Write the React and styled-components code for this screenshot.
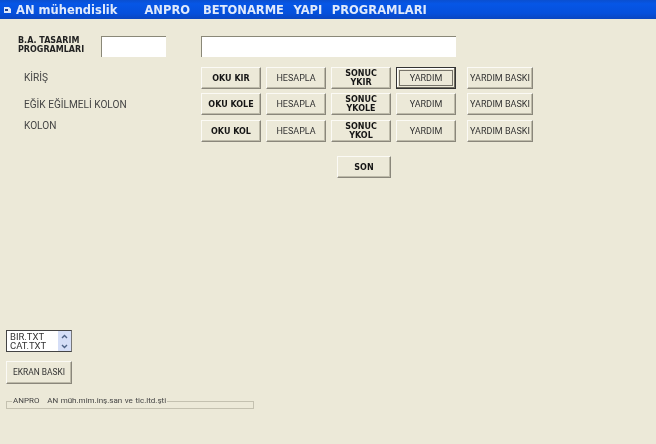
import React from 'react';
import styled, { createGlobalStyle } from 'styled-components';

const Global = createGlobalStyle`
  html, body { margin: 0; padding: 0; background: #ece9d8; }
  #root { width: 656px; height: 444px; overflow: hidden; }
`;

const Win = styled.div`
  width: 656px;
  height: 444px;
  background: #ece9d8;
  display: flex;
  flex-direction: column;
  font-family: Roboto, "Liberation Sans", sans-serif;
  color: #333;
  filter: blur(0.35px);
`;

const TitleBar = styled.div`
  height: 19px;
  flex: none;
  display: flex;
  align-items: center;
  padding-left: 4px;
  background: linear-gradient(180deg, #0a4fd0 0%, #0656e6 20%, #0550dc 70%, #0a46c0 100%);
  color: #dfe9fb;
  font-family: "DejaVu Sans", Verdana, sans-serif;
  font-weight: bold;
  font-size: 11.5px;
  white-space: pre;
`;

const TitleIcon = styled.svg`
  width: 7px;
  height: 6px;
  margin-right: 5px;
  flex: none;
`;

const TitleText = styled.span`
  margin-left: ${p => p.$gap || 0}px;
  word-spacing: ${p => p.$spread || 0}px;
`;

const Body = styled.div`
  flex: 1;
  display: flex;
  flex-direction: column;
  padding: 17px 0 0 6px;
`;

const TopRow = styled.div`
  display: flex;
  align-items: flex-start;
  height: 21px;
`;

const CaptionLabel = styled.div`
  width: 95px;
  padding: 0 0 0 12px;
  box-sizing: border-box;
  font-family: "DejaVu Sans", Verdana, sans-serif;
  font-weight: bold;
  font-size: 8px;
  line-height: 9px;
  color: #222;
`;

const Field = styled.div`
  width: ${p => p.$w}px;
  height: 21px;
  margin-right: ${p => p.$mr || 0}px;
  background: #fff;
  border-top: 1px solid #8a8878;
  border-left: 1px solid #8a8878;
  box-sizing: border-box;
`;

const Rows = styled.div`
  display: flex;
  flex-direction: column;
  margin-top: 10px;
`;

const Row = styled.div`
  display: flex;
  height: 21px;
  margin-bottom: ${p => p.$mb}px;
`;

const RowLabel = styled.div`
  width: 195px;
  margin-top: ${p => p.$top}px;
  padding-left: 18px;
  box-sizing: border-box;
  font-size: 10.1px;
  line-height: 11px;
  color: #444;
`;

const Btn = styled.div`
  width: ${p => p.$w || 60}px;
  height: ${p => p.$h || 22}px;
  margin-right: ${p => p.$mr ?? 5}px;
  flex: none;
  box-sizing: border-box;
  display: flex;
  align-items: center;
  justify-content: center;
  text-align: center;
  background: #ece9d8;
  border-style: solid;
  border-width: 1px;
  border-color: #fbfaf5 #8a877b #8a877b #fbfaf5;
  box-shadow: inset -1px -1px 0 #bdbaa9;
  font-size: 9px;
  line-height: 9px;
  color: #333;
  white-space: pre;

  ${p => p.$bold && `
    font-family: "DejaVu Sans", Verdana, sans-serif;
    font-weight: bold;
    font-size: 8px;
    color: #151515;
  `}

  ${p => p.$focus && `
    border: 1px solid #333;
    box-shadow: inset -1px -1px 0 #6e6c60, inset 1px 1px 0 #fff;
    position: relative;
    &::after {
      content: "";
      position: absolute;
      inset: 2px;
      border: 1px solid #77746a;
    }
  `}
`;

const SonRow = styled.div`
  display: flex;
  margin: 15px 0 0 331px;
`;

const Bottom = styled.div`
  margin-top: 152px;
  display: flex;
  flex-direction: column;
  align-items: flex-start;
`;

const ListBox = styled.div`
  width: 66px;
  height: 22px;
  box-sizing: border-box;
  display: flex;
  background: #fff;
  border: 1px solid #444;
  border-right-color: #777;
  font-size: 9.5px;
  line-height: 9px;
  color: #333;
`;

const ListItems = styled.div`
  flex: 1;
  padding: 1px 0 0 3px;
`;

const ScrollCol = styled.div`
  width: 13px;
  display: flex;
  flex-direction: column;
`;

const ScrollBtn = styled.div`
  flex: 1;
  background: #d5def7;
  display: flex;
  align-items: center;
  justify-content: center;
`;

const PrintBtn = styled(Btn)`
  margin-top: 9px;
  width: 66px;
  height: 23px;
  font-size: 8.4px;
`;

const Group = styled.div`
  margin-top: 17px;
  width: 248px;
  height: 8px;
  box-sizing: border-box;
  border: 1px solid #c4c1b0;
  position: relative;
`;

const Legend = styled.span`
  position: absolute;
  left: 5px;
  top: -6px;
  background: #ece9d8;
  padding: 0 1px;
  font-size: 8px;
  line-height: 10px;
  color: #444;
  white-space: pre;
  word-spacing: 0.6px;
`;

const Chevron = ({ up }) => (
  <svg width="7" height="5" viewBox="0 0 7 5">
    <path d={up ? 'M1 4 L3.5 1.5 L6 4' : 'M1 1 L3.5 3.5 L6 1'} fill="none" stroke="#4d6185" strokeWidth="1.4" />
  </svg>
);

const rows = [
  { label: 'KİRİŞ', top: 5, oku: 'OKU KIR', sonuc: 'SONUC\nYKIR', mb: 5, focus: true },
  { label: 'EĞİK EĞİLMELİ KOLON', top: 6, oku: 'OKU KOLE', sonuc: 'SONUC\nYKOLE', mb: 6 },
  { label: 'KOLON', top: 0, oku: 'OKU KOL', sonuc: 'SONUC\nYKOL', mb: 0 },
];

export default function App() {
  return (
    <Win>
      <Global />
      <TitleBar>
        <TitleIcon viewBox="0 0 7 6">
          <path d="M0 0h5l2 2v4H0z" fill="#dfe8f8" />
          <path d="M1 2h3v2H1z" fill="#21408c" />
        </TitleIcon>
        <TitleText>AN mühendislik</TitleText>
        <TitleText $gap={27}>ANPRO</TitleText>
        <TitleText $gap={13} $spread={5.5}>BETONARME YAPI PROGRAMLARI</TitleText>
      </TitleBar>
      <Body>
        <TopRow>
          <CaptionLabel>B.A. TASARIM<br />PROGRAMLARI</CaptionLabel>
          <Field $w={65} $mr={35} />
          <Field $w={255} />
        </TopRow>
        <Rows>
          {rows.map(r => (
            <Row key={r.oku} $mb={r.mb}>
              <RowLabel $top={r.top}>{r.label}</RowLabel>
              <Btn $bold>{r.oku}</Btn>
              <Btn>HESAPLA</Btn>
              <Btn $bold>{r.sonuc}</Btn>
              <Btn $focus={r.focus} $mr={11}>YARDIM</Btn>
              <Btn $w={66}>YARDIM BASKI</Btn>
            </Row>
          ))}
        </Rows>
        <SonRow>
          <Btn $bold $w={54}>SON</Btn>
        </SonRow>
        <Bottom>
          <ListBox>
            <ListItems>BIR.TXT<br />CAT.TXT</ListItems>
            <ScrollCol>
              <ScrollBtn><Chevron up /></ScrollBtn>
              <ScrollBtn><Chevron /></ScrollBtn>
            </ScrollCol>
          </ListBox>
          <PrintBtn>EKRAN BASKI</PrintBtn>
          <Group>
            <Legend>ANPRO   AN müh.mim.inş.san ve tic.ltd.şti</Legend>
          </Group>
        </Bottom>
      </Body>
    </Win>
  );
}
